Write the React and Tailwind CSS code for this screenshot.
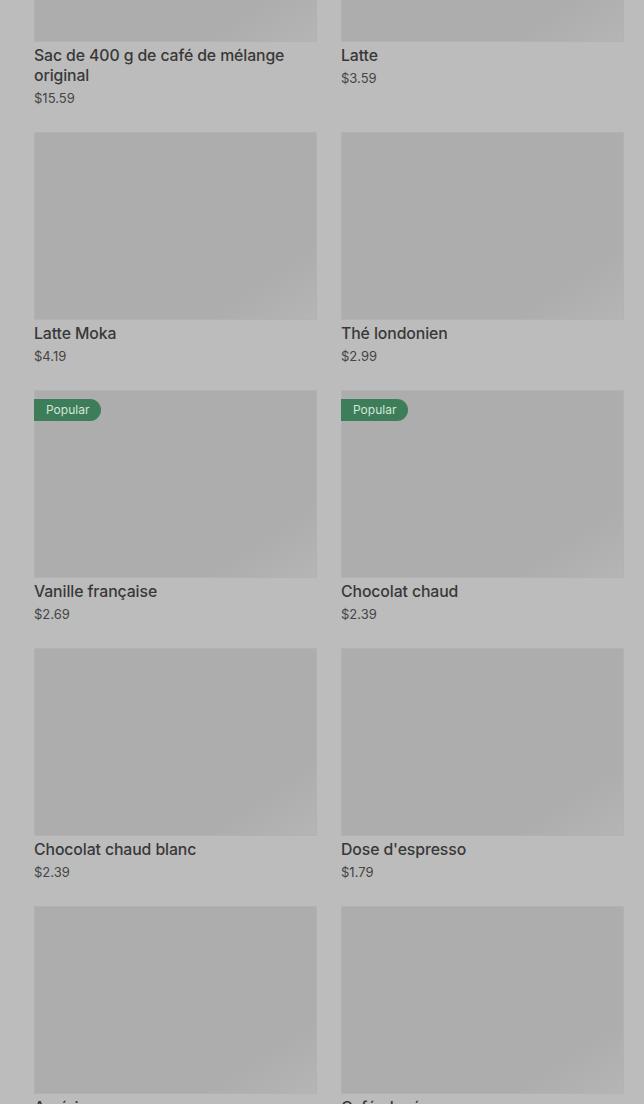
import React from "react";

const products = [
  { name: "Sac de 400 g de café de mélange original", price: "$15.59" },
  { name: "Latte", price: "$3.59" },
  { name: "Latte Moka", price: "$4.19" },
  { name: "Thé londonien", price: "$2.99" },
  { name: "Vanille française", price: "$2.69", popular: true },
  { name: "Chocolat chaud", price: "$2.39", popular: true },
  { name: "Chocolat chaud blanc", price: "$2.39" },
  { name: "Dose d'espresso", price: "$1.79" },
  { name: "Américano", price: "$2.19" },
  { name: "Café glacé", price: "$2.79" },
];

export default function App() {
  return (
    <div
      className="h-[1104px] overflow-hidden bg-[#bcbcbc] text-[#383838]"
      style={{ fontFamily: "Inter, 'Liberation Sans', sans-serif" }}
    >
      {/* page is scrolled down, top of grid sits above the viewport */}
      <div className="-mt-[146px] grid grid-cols-2 gap-x-6 gap-y-6 pl-[34px] pr-[20px]">
        {products.map((p, i) => (
          <ProductCard key={i} {...p} />
        ))}
      </div>
    </div>
  );
}

function ProductCard({ name, price, popular }) {
  return (
    <div className="flex flex-col">
      <div className="relative h-[188px] border border-[#b2b2b2] bg-gradient-to-br from-[#adadad] via-[#adadad] via-80% to-[#b5b5b5]">
        {popular && (
          <span className="absolute -left-px top-2 flex h-[22px] items-center rounded-r-full bg-[#3d7d59] pl-3 pr-3 text-[12px] text-[#d3e6da]">
            Popular
          </span>
        )}
      </div>
      <div className="mt-[4px] text-[15.8px] font-medium leading-5 tracking-[-0.1px]">{name}</div>
      <div className="mt-[2px] text-[13px] leading-5 text-[#454545]">{price}</div>
    </div>
  );
}
